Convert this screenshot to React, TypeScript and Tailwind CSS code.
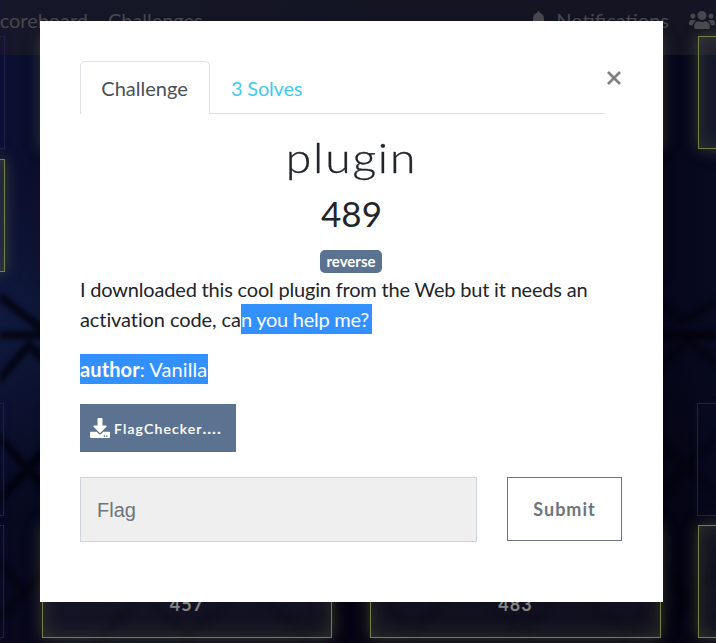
import { FaBell, FaUsers, FaDownload } from "react-icons/fa";

const tones = {
  solved: "border-[#211e48] bg-[#18164018] shadow-[0_0_6px_#1c184855]",
  open: "border-[#747f48] bg-[#ffffff0d] shadow-[0_0_14px_#66704088,inset_0_0_20px_#66704058]",
  red: "border-transparent shadow-[0_0_12px_#48001060]",
};

type Tone = keyof typeof tones;

function Card({ tone, points }: { tone: Tone; points?: string }) {
  return (
    <div className={`relative h-[113px] border pt-[66px] text-center text-[18px] font-bold leading-[24px] tracking-[1px] text-[#858585] ${tones[tone]}`}>
      {points}
    </div>
  );
}

function Truss() {
  return (
    <svg className="absolute inset-0 blur-[2px]" width="716" height="643" fill="none" stroke="#010109" strokeWidth="8" strokeOpacity=".75">
      <path d="M0 335H716" />
      <path d="M-5 293L45 331M-5 384L29 345L45 361M-5 433L45 488M-5 505L45 450" />
      <path d="M0 560L25 596M-5 622L45 572" strokeOpacity=".5" />
      <path d="M655 300L683 321L721 298M655 371L688 340L721 367M655 439L687 467L721 497M655 500L687 467L721 433M655 560L688 600L721 632M655 635L688 600L721 565" strokeOpacity=".5" />
      <path d="M92 648L140 595M145 595L188 637L235 595M260 595L305 634L350 595M376 595L414 632L450 595M480 595L520 632L560 595M585 595L625 634L665 595" strokeOpacity=".35" />
    </svg>
  );
}

export default function App() {
  return (
    <div className="relative h-[643px] w-[716px] overflow-hidden bg-[#06071a] font-['Lato',sans-serif]">
      <div className="absolute inset-0 bg-[linear-gradient(90deg,#0c1034_0%,#0a0e2b_6%,#07081c_50%,#050619_92%,#080a20_100%)]" />
      <div className="absolute inset-0 bg-[radial-gradient(ellipse_at_0%_50%,#14254c66,transparent_35%),linear-gradient(180deg,transparent_50%,#02020a70_80%,#06020e90_100%)]" />
      <Truss />

      <nav className="absolute inset-x-0 top-0 flex h-[55px] items-center justify-between bg-[#1a1b27b8] text-[20px] text-[#48484e]">
        <div className="-ml-[11px] mb-[16px] flex gap-[20px] tracking-[-0.05px]">
          <span>Scoreboard</span>
          <span>Challenges</span>
        </div>
        <div className="mb-[16px] mr-[1px] flex items-center">
          <FaBell className="mr-[9px] size-[17px]" />
          <span className="mr-[20px]">Notifications</span>
          <FaUsers className="size-[26px]" />
        </div>
      </nav>

      <main className="absolute left-[-286px] top-[36px] grid w-[1275px] grid-cols-[291px_291px_291px_291px] gap-x-[37px]">
        <Card tone="solved" />
        <Card tone="open" />
        <Card tone="open" />
        <Card tone="open" />
        <div className="col-span-4 mt-[10px] grid grid-cols-[291px_291px_291px_291px] gap-x-[37px]">
          <Card tone="open" />
          <Card tone="red" />
          <Card tone="red" />
        </div>
        <div className="col-span-4 mt-[131px] grid grid-cols-[290px_290px_291px_291px] gap-x-[38px] gap-y-[9px]">
          <Card tone="solved" />
          <Card tone="solved" />
          <div className="-ml-px"><Card tone="solved" /></div>
          <div className="-ml-[2px]"><Card tone="solved" /></div>
          <Card tone="solved" />
          <Card tone="open" points="457" />
          <Card tone="open" points="483" />
          <div className="-ml-px"><Card tone="open" /></div>
        </div>
      </main>

      <section role="dialog" className="absolute left-[40px] top-[21px] flex h-[581px] w-[623px] flex-col bg-white px-[40px] pt-[40px] text-[20px] leading-[30px] text-[#212529]">
        <header className="flex h-[53px] items-start">
          <div className="flex h-[53px] w-[525px]">
            <button className="h-[53px] w-[130px] rounded-t-[5px] border border-b-0 border-[#dee2e6] pr-px text-[#495057]">Challenge</button>
            <button className="flex-1 border-b border-[#dee2e6] pl-[21px] pt-px text-left tracking-[-0.2px] text-[#3fcdee]">3 Solves</button>
          </div>
          <button aria-label="Close" className="mt-[8px] flex w-[17px] justify-center">
            <svg width="14" height="18" viewBox="0 0 14 18" stroke="#808080" strokeWidth="2.7">
              <path d="M1 3L13 15M13 3L1 15" />
            </svg>
          </button>
        </header>

        <h2 className="mt-[20px] scale-x-[1.13] text-center text-[41px] font-light leading-[48px] tracking-[1.6px] [-webkit-text-stroke:0.3px_#212529]">plugin</h2>
        <h3 className="mt-[10px] text-center text-[35px] leading-[42px]">489</h3>
        <div className="mt-[16px] flex h-[24px] justify-center pr-px">
          <span className="h-[23px] w-[62px] rounded-[5px] bg-[#5b7290] text-center text-[15px] font-bold leading-[23px] text-white">reverse</span>
        </div>
        <p className="whitespace-nowrap tracking-[-0.19px]">
          I downloaded this cool plugin from the Web but it needs an<br />
          <span className="tracking-[-0.09px]">activation code, ca<span className="inline-block h-[30px] w-[131px] bg-[#3390ff] align-top tracking-[-0.26px] text-white">n you help me?</span></span>
        </p>
        <p className="mt-[20px]">
          <span className="inline-block h-[30px] w-[128px] whitespace-nowrap bg-[#3390ff] align-top tracking-[0.1px] text-white"><b>author</b>: Vanilla</span>
        </p>
        <button className="mt-[20px] flex h-[48px] w-[156px] items-center bg-[#5b7290] pl-[10px] text-white">
          <FaDownload className="mb-px mr-[4px] size-[20px]" />
          <span className="pt-px text-[14px] font-medium tracking-[1.15px] [-webkit-text-stroke:0.2px_white]">FlagChecker<b className="font-black tracking-[1.5px]">....</b></span>
        </button>
        <div className="mt-[25px] flex justify-between">
          <input placeholder="Flag" className="h-[65px] w-[397px] border border-[#ced4da] bg-[#efefef] px-[16px] pt-[2px] font-['Liberation_Sans',Arial,sans-serif] text-[20px] placeholder:text-[#6c757d]" />
          <button className="mr-px h-[64px] w-[115px] border border-[#6c757d] text-[18px] font-bold tracking-[1px] text-[#6c757d]">Submit</button>
        </div>
      </section>
    </div>
  );
}
